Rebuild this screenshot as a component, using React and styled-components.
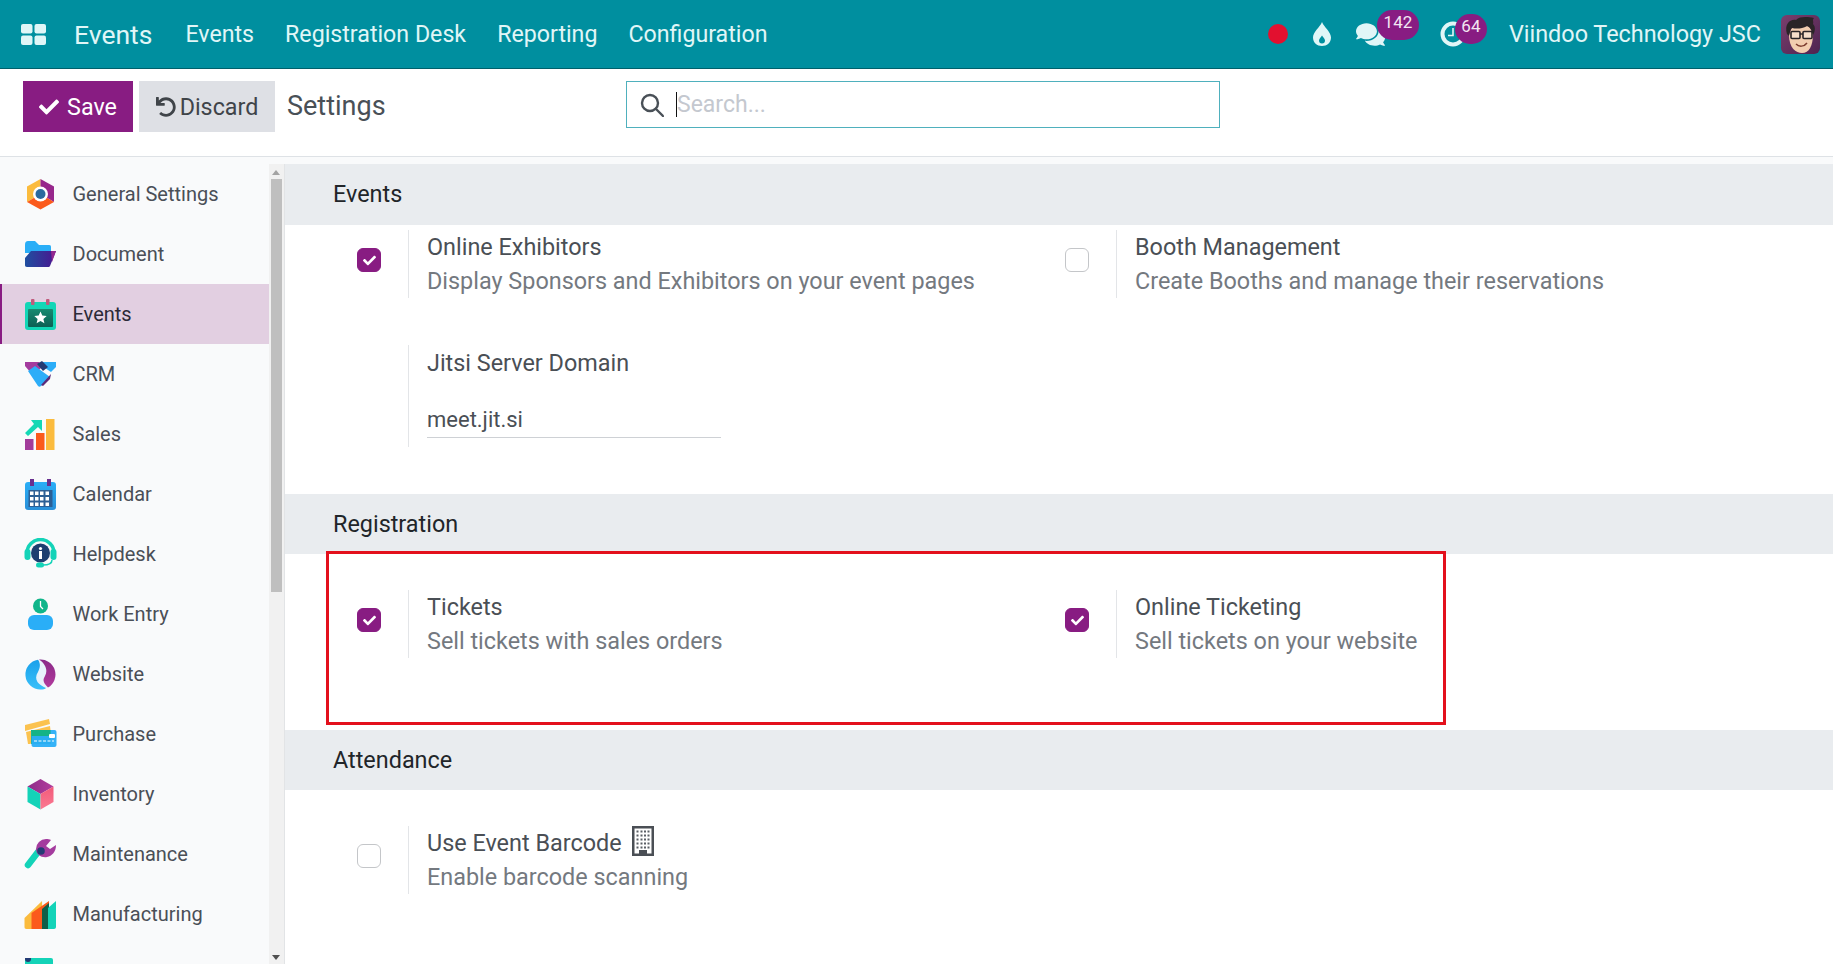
import React from 'react';
import styled, { createGlobalStyle } from 'styled-components';
import { FaCheck, FaUndo, FaComments } from 'react-icons/fa';

const GlobalStyle = createGlobalStyle`
  html, body {
    margin: 0;
    padding: 0;
    background: #fff;
    font-family: 'Roboto', 'Liberation Sans', sans-serif;
  }
`;

const Page = styled.div`
  display: flex;
  flex-direction: column;
  height: 100vh;
  overflow: hidden;
`;

const TopBar = styled.header`
  display: flex;
  align-items: center;
  flex: none;
  height: 68px;
  padding: 0 13px 0 21px;
  background: #008f9f;
  border-bottom: 1px solid #00606b;
  color: #e0f6f7;
`;

const Brand = styled.span`
  margin: 0 33px 0 28px;
  font-size: 26.500px;
`;

const NavLink = styled.a`
  margin-right: 31px;
  font-size: 23.200px;
`;

const Systray = styled.div`
  display: flex;
  align-items: center;
  margin-left: auto;
`;

const RecordDot = styled.span`
  width: 20px;
  height: 20px;
  border-radius: 50%;
  background: #e2102f;
  margin-right: 25px;
`;

const TrayIcon = styled.span`
  position: relative;
  display: flex;
  margin-right: ${(p) => p.$gap}px;
`;

const Badge = styled.span`
  position: absolute;
  top: ${(p) => p.$top}px;
  left: ${(p) => p.$left}px;
  width: ${(p) => p.$width}px;
  height: 30px;
  border-radius: 15px;
  background: #881c82;
  color: #f3e6f2;
  font-size: 17px;
  line-height: 24px;
  text-align: center;
`;

const Company = styled.span`
  margin-right: 20px;
  font-size: 23.400px;
`;

const ControlPanel = styled.div`
  display: flex;
  flex: none;
  box-sizing: border-box;
  height: 88px;
  padding: 12px 0 0 23px;
  background: #fff;
  border-bottom: 1px solid #dee2e6;
`;

const ActionGroup = styled.div`
  display: flex;
  align-items: flex-start;
  width: 603px;
`;

const ActionButton = styled.button`
  display: flex;
  align-items: center;
  justify-content: center;
  gap: ${(p) => (p.$primary ? 8 : 4)}px;
  width: ${(p) => (p.$primary ? 110 : 136)}px;
  height: 51px;
  margin-right: ${(p) => (p.$primary ? 6 : 12)}px;
  padding: 0;
  border: none;
  background: ${(p) => (p.$primary ? '#881c82' : '#dee0e5')};
  color: ${(p) => (p.$primary ? '#fff' : '#3f4449')};
  font-family: inherit;
  font-size: 23.300px;
`;

const PageTitle = styled.span`
  font-size: 27px;
  line-height: 51px;
  color: #495057;
`;

const SearchBox = styled.div`
  display: flex;
  align-items: center;
  box-sizing: border-box;
  width: 594px;
  height: 47px;
  padding-left: 13px;
  border: 1px solid #4fb0bd;
  color: #495057;
`;

const Caret = styled.span`
  width: 1px;
  height: 25px;
  margin-left: 12px;
  background: #111;
`;

const Placeholder = styled.span`
  font-size: 23px;
  color: #c4c8cf;
`;

const Body = styled.div`
  display: flex;
  flex: 1;
  min-height: 0;
  padding-top: 7px;
  background: #f9fafb;
`;

const Sidebar = styled.nav`
  flex: none;
  width: 269px;
  overflow: hidden;
`;

const AppRow = styled.div`
  display: flex;
  align-items: center;
  height: 60px;
  padding-left: 24px;
  background: ${(p) => (p.$active ? '#e2cfe1' : 'transparent')};
  box-shadow: ${(p) => (p.$active ? 'inset 2px 0 0 #881c82' : 'none')};
  color: ${(p) => (p.$active ? '#2c2a38' : '#4a4f57')};
  font-size: 20px;
`;

const AppIcon = styled.svg`
  flex: none;
  width: 33px;
  height: 33px;
  margin-right: 15.500px;
`;

const ScrollRail = styled.div`
  position: relative;
  flex: none;
  box-sizing: border-box;
  width: 16px;
  padding: 15px 2px 0;
  background: #f1f1f1;
  border-right: 1px solid #e2e4e6;
`;

const ScrollThumb = styled.div`
  height: 413px;
  background: #bfbfbf;
`;

const ScrollArrow = styled.span`
  position: absolute;
  left: 3px;
  ${(p) => (p.$down ? 'bottom: 4px;' : 'top: 6px;')}
  border-left: 4.5px solid transparent;
  border-right: 4.5px solid transparent;
  ${(p) => (p.$down ? 'border-top: 5px solid #505050;' : 'border-bottom: 5px solid #a3a3a3;')}
`;

const Content = styled.main`
  flex: 1;
  min-width: 0;
  background: #fff;
`;

const SectionHeader = styled.h2`
  margin: 0;
  height: ${(p) => p.$height || 60}px;
  padding-left: 48px;
  background: #e9ecef;
  color: #212529;
  font-size: 23.400px;
  font-weight: 400;
  line-height: ${(p) => p.$height || 60}px;
`;

const SectionBody = styled.section`
  position: relative;
  display: grid;
  grid-template-columns: 708px 708px;
  row-gap: 47px;
  padding: ${(p) => p.$top}px 0 ${(p) => p.$bottom}px 72px;
`;

const Setting = styled.div`
  display: flex;
  align-items: flex-start;
`;

const CheckCell = styled.div`
  flex: none;
  width: 51px;
  height: 24px;
  margin-top: 18px;
`;

const CheckBox = styled.span`
  display: flex;
  align-items: center;
  justify-content: center;
  box-sizing: border-box;
  width: 24px;
  height: 24px;
  border-radius: 6px;
  background: ${(p) => (p.$checked ? '#881c82' : '#fff')};
  border: 1px solid ${(p) => (p.$checked ? '#881c82' : '#c4c6c9')};
  color: #fff;
`;

const SettingPane = styled.div`
  padding: ${(p) => p.$top || 0}px 0 0 18px;
  border-left: 1px solid #e3e5e8;
`;

const SettingTitle = styled.div`
  display: flex;
  align-items: flex-start;
  gap: 10px;
  color: #4a4f55;
  font-size: 23.400px;
  line-height: 34px;
`;

const SettingHelp = styled.div`
  color: #74797f;
  font-size: 23.400px;
  line-height: 34px;
`;

const TextField = styled.input`
  display: block;
  box-sizing: border-box;
  width: 294px;
  height: 36px;
  margin: 22px 0 9px;
  padding: 0;
  border: none;
  border-bottom: 1px solid #ced1d5;
  outline: none;
  color: #4a4f55;
  font-family: inherit;
  font-size: 22px;
`;

const Annotation = styled.div`
  position: absolute;
  top: -3px;
  left: 41px;
  box-sizing: border-box;
  width: 1120px;
  height: 174px;
  border: 3px solid #e3101c;
  pointer-events: none;
`;

const AppsIcon = () => (
  <svg width="25" height="21" viewBox="0 0 25 21" fill="currentColor">
    <rect width="11.5" height="9.5" rx="2" />
    <rect x="13.5" width="11.5" height="9.5" rx="2" />
    <rect y="11.5" width="11.5" height="9.5" rx="2" />
    <rect x="13.5" y="11.5" width="11.5" height="9.5" rx="2" />
  </svg>
);

const DropIcon = () => (
  <svg width="18" height="24" viewBox="0 0 18 24">
    <path d="M9 0C11 5 18 10 18 15.5C18 20.5 14 24 9 24S0 20.5 0 15.5C0 10 7 5 9 0Z" fill="#e0f6f7" />
    <path d="M9 13.5C10 15.5 12 16.5 12 18.5A3 3 0 0 1 6 18.5C6 16.5 8 15.5 9 13.5Z" fill="#008f9f" />
  </svg>
);

const ClockIcon = () => (
  <svg width="26" height="26" viewBox="0 0 26 26" fill="none" stroke="#e0f6f7">
    <circle cx="13" cy="13" r="10.5" strokeWidth="4" />
    <path d="M13 7V14.5H8" strokeWidth="1.6" />
  </svg>
);

const BuildingIcon = () => (
  <svg width="22" height="30" viewBox="0 0 22 30">
    <path fillRule="evenodd" fill="#4a4f55" d="M0 0H22V30H0ZM2.500 2.500V27.500H19.500V2.500Z" />
    <g fill="#5a5f65">
      {[4.5, 8.5, 12.5, 16.5, 20.5].map((y) =>
        [4.5, 8.5, 12, 15.5].map((x) => <rect key={`${x}-${y}`} x={x} y={y} width="2" height="2" />),
      )}
      <rect x="7" y="24" width="8" height="5" fill="#4a4f55" />
    </g>
  </svg>
);

const Avatar = () => (
  <svg width="39" height="39" viewBox="0 0 39 39">
    <defs>
      <linearGradient id="avatarBg" x1="0" y1="0" x2="1" y2="1">
        <stop offset="0" stopColor="#7a3f6d" />
        <stop offset="1" stopColor="#4e2350" />
      </linearGradient>
    </defs>
    <rect width="39" height="39" rx="6" fill="url(#avatarBg)" />
    <path d="M8 20C8 33 15 38 21 38C28 38 32 31 32 19L28 11L11 12Z" fill="#f2cdb0" />
    <path d="M6 19C3 9 9 4 15 5C19 1 27 2 33 3C31 5 33 7 32 9C35 12 34 17 32 20C31 15 29 12 26 11C21 14 15 14 11 13C9 15 9 17 8 21Z" fill="#2a2427" />
    <g fill="rgba(255,255,255,.35)" stroke="#2a2427" strokeWidth="1.6">
      <rect x="10" y="16.5" width="9" height="7" rx="1" />
      <rect x="22" y="16.5" width="9" height="7" rx="1" />
    </g>
    <path d="M19 19H22" stroke="#2a2427" strokeWidth="1.4" />
    <path d="M15 29C18 32 23 32 26 28" stroke="#7c3b2e" strokeWidth="1.5" fill="none" />
  </svg>
);

const Grad = ({ id, from, to, vertical }) => (
  <linearGradient id={id} x1="0" y1="0" x2={vertical ? 0 : 1} y2={vertical ? 1 : 0}>
    <stop offset="0" stopColor={from} />
    <stop offset="1" stopColor={to} />
  </linearGradient>
);

const appIcons = {
  general: (
    <>
      <path d="M16.5 1V16L3 24V8.5Z" fill="#fbbb3d" />
      <path d="M16.5 1V16L30 24V8.5Z" fill="#97278c" />
      <path d="M3 24L16.5 16L30 24L16.5 31.5Z" fill="#fb5a1c" />
      <circle cx="16.5" cy="16" r="7.5" fill="#fff" />
      <circle cx="16.5" cy="16" r="5" fill="#2b6a9e" />
    </>
  ),
  document: (
    <>
      <defs>
        <Grad id="docFront" from="#1f4fa0" to="#4a1590" />
      </defs>
      <path d="M1 7C1 4 2 3 4 3H11L15 7H25C27 7 27 8 27 10V15H1Z" fill="#2aaef7" />
      <path d="M7 13H32L26 28C26 28.5 25 29 24 29H3C1.500 29 1 28 1 27V20Z" fill="url(#docFront)" />
      <path d="M27 13H32L28 24Z" fill="#93278f" />
    </>
  ),
  events: (
    <>
      <defs>
        <Grad id="eventsInner" from="#178a70" to="#0c5f54" vertical />
      </defs>
      <rect x="1" y="4" width="31" height="28" rx="3" fill="#12d6b6" />
      <rect x="7" y="1" width="3.500" height="6" rx="1" fill="#c05a7b" />
      <rect x="22" y="1" width="3.500" height="6" rx="1" fill="#c05a7b" />
      <rect x="4" y="11" width="25" height="18" rx="1" fill="url(#eventsInner)" />
      <path d="M16.500 13.500L18.300 17.600L22.700 18L19.400 21L20.400 25.300L16.500 23L12.600 25.300L13.600 21L10.300 18L14.700 17.600Z" fill="#fff" />
    </>
  ),
  crm: (
    <>
      <path d="M1 4H15L19 8L12 15L7 15L1 8Z" fill="#a43b9e" />
      <path d="M18 4H32V9L27 14L18 8Z" fill="#2cadf8" />
      <path d="M4 13L11 8L15 11L26 19L17 28C16 29 15 29 14 28Z" fill="#2cadf8" />
      <path d="M13 6L18 3L24 9L19 13Z" fill="#233a74" />
      <path d="M17 27L27 16L26 21L19 28Z" fill="#5b2a78" />
    </>
  ),
  sales: (
    <>
      <rect x="1" y="21" width="8.500" height="11" fill="#a23c9a" />
      <rect x="12" y="15" width="8.500" height="17" fill="#fb5a1c" />
      <rect x="22" y="1" width="8.500" height="31" fill="#fbbb3d" />
      <path d="M4 3H18V14L14 10L4 19L1 16L10 7L7 3Z" fill="#14d8b5" transform="translate(0 -1)" />
    </>
  ),
  calendar: (
    <>
      <defs>
        <Grad id="calendarBg" from="#2aaef7" to="#2a8fd8" vertical />
      </defs>
      <rect x="1" y="4" width="31" height="28" rx="3" fill="url(#calendarBg)" />
      <rect x="6" y="1" width="4" height="7" fill="#6a2f8f" />
      <rect x="23" y="1" width="4" height="7" fill="#6a2f8f" />
      <rect x="4.500" y="12" width="24" height="17" fill="#2c5f95" />
      <g fill="#fff">
        {[13.5, 19, 24.5].map((y) =>
          [6, 11, 16, 21.5].map((x) => <rect key={`${x}-${y}`} x={x} y={y} width="3.500" height="3.500" />),
        )}
      </g>
    </>
  ),
  helpdesk: (
    <>
      <path d="M3 15A13.500 13.500 0 0 1 30 15" fill="none" stroke="#14d3b8" strokeWidth="3.500" />
      <rect x="0.500" y="11" width="6" height="11" rx="3" fill="#14d3b8" />
      <rect x="26.500" y="11" width="6" height="11" rx="3" fill="#14d3b8" />
      <circle cx="16.500" cy="15" r="9.500" fill="#1e3f70" />
      <circle cx="16.500" cy="10.500" r="1.600" fill="#fff" />
      <rect x="15" y="13" width="3" height="8" fill="#fff" />
      <path d="M28 22C28 26 24 27 19 27" fill="none" stroke="#14d3b8" strokeWidth="1.500" />
      <rect x="12" y="24.500" width="8" height="5" rx="2.500" fill="#14d3b8" />
    </>
  ),
  work: (
    <>
      <circle cx="16.500" cy="8" r="7.500" fill="#10b58a" />
      <path d="M16.500 3V8.500L19 11" stroke="#fff" strokeWidth="1.300" fill="none" />
      <rect x="4" y="17" width="25" height="15" rx="6" fill="#2aaef7" />
    </>
  ),
  website: (
    <>
      <defs>
        <Grad id="webPurple" from="#8b2a88" to="#b23a9c" vertical />
        <Grad id="webBlue" from="#19a0ea" to="#39c0f9" vertical />
      </defs>
      <circle cx="16.500" cy="16.500" r="15" fill="#e8f2fb" />
      <path d="M14 1.700A15 15 0 0 0 16.500 31.500C19 31.500 21 31 22 30C15 27 9 22 14 14C16 10 17 6 14 1.700Z" fill="url(#webBlue)" />
      <path d="M15 1.600A15 15 0 0 1 24 29.500C20 25 18 23 21 18C24 13 22 6 15 1.600Z" fill="url(#webPurple)" />
    </>
  ),
  purchase: (
    <>
      <path d="M1 7L25 1L26 6L1 13Z" fill="#fbc24f" />
      <path d="M2 14L26 8L27 16L6 26H4Z" fill="#fbc24f" />
      <rect x="7" y="12" width="20" height="14" fill="#14b386" />
      <rect x="7.500" y="12" width="25" height="17" rx="2" fill="#2aaef7" opacity="0.95" />
      <rect x="7.500" y="12" width="19" height="6" fill="#14b386" />
      <rect x="25" y="16" width="6" height="4" rx="1" fill="#fff" />
      <path d="M10 23H30" stroke="#fff" strokeWidth="1.200" strokeDasharray="3 1.500" />
    </>
  ),
  inventory: (
    <>
      <defs>
        <Grad id="cubeTop" from="#8e2b8a" to="#b33d9c" />
        <Grad id="cubeRight" from="#f25a7a" to="#fb7a92" vertical />
      </defs>
      <path d="M16.500 1L29.500 8.500L16.500 16L3.500 8.500Z" fill="url(#cubeTop)" />
      <path d="M3.500 8.500L16.500 16V31.500L3.500 24Z" fill="#14d3b8" />
      <path d="M29.500 8.500L16.500 16V31.500L29.500 24Z" fill="url(#cubeRight)" />
    </>
  ),
  maintenance: (
    <>
      <path d="M14 14L4 27" stroke="#14d3b8" strokeWidth="6.500" strokeLinecap="round" />
      <path d="M22 1A10 10 0 0 0 12 11C12 17 18 20 23 19C28 18 32 14 32 7L26 11L22 8L27 2C25.500 1.300 24 1 22 1Z" fill="#a43b9e" />
      <circle cx="17" cy="13" r="3.800" fill="#233a74" />
    </>
  ),
  manufacturing: (
    <>
      <path d="M0.500 20L18 3L19 31H2.500C1 31 0.500 30 0.500 29Z" fill="#fbbb3d" />
      <path d="M7.500 15L25 3V31H7.500Z" fill="#fb5a1c" />
      <path d="M18 11L25 5V31H18Z" fill="#0f5f49" />
      <path d="M24 10L32 3V29C32 30 31 31 30 31H24Z" fill="#14d3b8" />
    </>
  ),
  more: (
    <>
      <rect x="1" y="0" width="28" height="32" rx="2" fill="#14d3b8" />
      <circle cx="4" cy="1" r="3" fill="#233a74" />
    </>
  ),
};

const apps = [
  ['General Settings', 'general'],
  ['Document', 'document'],
  ['Events', 'events'],
  ['CRM', 'crm'],
  ['Sales', 'sales'],
  ['Calendar', 'calendar'],
  ['Helpdesk', 'helpdesk'],
  ['Work Entry', 'work'],
  ['Website', 'website'],
  ['Purchase', 'purchase'],
  ['Inventory', 'inventory'],
  ['Maintenance', 'maintenance'],
  ['Manufacturing', 'manufacturing'],
  ['', 'more'],
];

const Check = ({ checked }) => (
  <CheckCell>
    <CheckBox $checked={checked}>{checked && <FaCheck size={13} />}</CheckBox>
  </CheckCell>
);

const SearchGlyph = () => (
  <svg width="24" height="24" viewBox="0 0 24 24" fill="none" stroke="currentColor" strokeWidth="2.400">
    <circle cx="10" cy="10" r="8" />
    <path d="M16 16L23 23" strokeLinecap="round" />
  </svg>
);

export default function App() {
  return (
    <Page>
      <GlobalStyle />
      <TopBar>
        <AppsIcon />
        <Brand>Events</Brand>
        <NavLink>Events</NavLink>
        <NavLink>Registration Desk</NavLink>
        <NavLink>Reporting</NavLink>
        <NavLink>Configuration</NavLink>
        <Systray>
          <RecordDot />
          <TrayIcon $gap={25}>
            <DropIcon />
          </TrayIcon>
          <TrayIcon $gap={55}>
            <FaComments size={29} color="#e0f6f7" />
            <Badge $top={-10} $left={21} $width={42}>142</Badge>
          </TrayIcon>
          <TrayIcon $gap={43}>
            <ClockIcon />
            <Badge $top={-7} $left={15} $width={32}>64</Badge>
          </TrayIcon>
          <Company>Viindoo Technology JSC</Company>
          <Avatar />
        </Systray>
      </TopBar>
      <ControlPanel>
        <ActionGroup>
          <ActionButton $primary>
            <FaCheck size={20} />
            Save
          </ActionButton>
          <ActionButton>
            <FaUndo size={20} />
            Discard
          </ActionButton>
          <PageTitle>Settings</PageTitle>
        </ActionGroup>
        <SearchBox>
          <SearchGlyph />
          <Caret />
          <Placeholder>Search...</Placeholder>
        </SearchBox>
      </ControlPanel>
      <Body>
        <Sidebar>
          {apps.map(([label, icon]) => (
            <AppRow key={icon} $active={label === 'Events'}>
              <AppIcon viewBox="0 0 33 33">{appIcons[icon]}</AppIcon>
              {label}
            </AppRow>
          ))}
        </Sidebar>
        <ScrollRail>
          <ScrollArrow />
          <ScrollThumb />
          <ScrollArrow $down />
        </ScrollRail>
        <Content>
          <SectionHeader $height={61}>Events</SectionHeader>
          <SectionBody $top={5} $bottom={47}>
            <Setting>
              <Check checked />
              <SettingPane>
                <SettingTitle>Online Exhibitors</SettingTitle>
                <SettingHelp>Display Sponsors and Exhibitors on your event pages</SettingHelp>
              </SettingPane>
            </Setting>
            <Setting>
              <Check />
              <SettingPane>
                <SettingTitle>Booth Management</SettingTitle>
                <SettingHelp>Create Booths and manage their reservations</SettingHelp>
              </SettingPane>
            </Setting>
            <Setting>
              <CheckCell />
              <SettingPane $top={1}>
                <SettingTitle>Jitsi Server Domain</SettingTitle>
                <TextField readOnly value="meet.jit.si" />
              </SettingPane>
            </Setting>
          </SectionBody>
          <SectionHeader>Registration</SectionHeader>
          <SectionBody $top={36} $bottom={72}>
            <Setting>
              <Check checked />
              <SettingPane>
                <SettingTitle>Tickets</SettingTitle>
                <SettingHelp>Sell tickets with sales orders</SettingHelp>
              </SettingPane>
            </Setting>
            <Setting>
              <Check checked />
              <SettingPane>
                <SettingTitle>Online Ticketing</SettingTitle>
                <SettingHelp>Sell tickets on your website</SettingHelp>
              </SettingPane>
            </Setting>
            <Annotation />
          </SectionBody>
          <SectionHeader>Attendance</SectionHeader>
          <SectionBody $top={36} $bottom={72}>
            <Setting>
              <Check />
              <SettingPane>
                <SettingTitle>
                  Use Event Barcode
                  <BuildingIcon />
                </SettingTitle>
                <SettingHelp>Enable barcode scanning</SettingHelp>
              </SettingPane>
            </Setting>
          </SectionBody>
        </Content>
      </Body>
    </Page>
  );
}
